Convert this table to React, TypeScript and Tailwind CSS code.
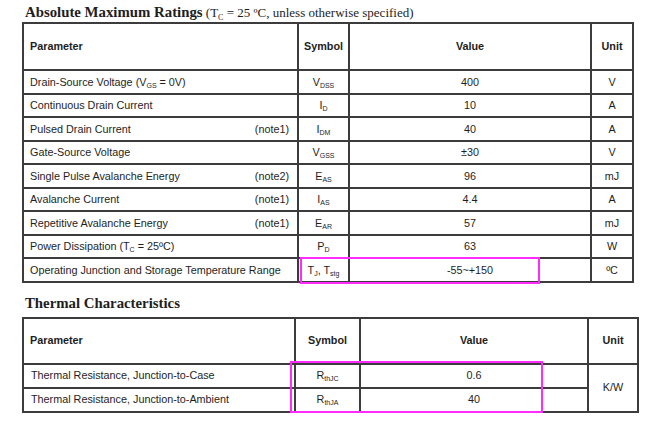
import React from 'react'

type Row = {
  param: React.ReactNode
  note?: string
  symbol: React.ReactNode
  value: string
  unit: string
}

const Sym = ({ base, sub }: { base: string; sub: string }) => (
  <span>
    {base}
    <span className="text-[7px] relative top-[2px]">{sub}</span>
  </span>
)

const ratings: Row[] = [
  {
    param: (
      <span>
        Drain-Source Voltage (V<span className="text-[7px] relative top-[2px]">GS</span> = 0V)
      </span>
    ),
    symbol: <Sym base="V" sub="DSS" />,
    value: '400',
    unit: 'V',
  },
  { param: 'Continuous Drain Current', symbol: <Sym base="I" sub="D" />, value: '10', unit: 'A' },
  { param: 'Pulsed Drain Current', note: '(note1)', symbol: <Sym base="I" sub="DM" />, value: '40', unit: 'A' },
  { param: 'Gate-Source Voltage', symbol: <Sym base="V" sub="GSS" />, value: '±30', unit: 'V' },
  { param: 'Single Pulse Avalanche Energy', note: '(note2)', symbol: <Sym base="E" sub="AS" />, value: '96', unit: 'mJ' },
  { param: 'Avalanche Current', note: '(note1)', symbol: <Sym base="I" sub="AS" />, value: '4.4', unit: 'A' },
  { param: 'Repetitive Avalanche Energy', note: '(note1)', symbol: <Sym base="E" sub="AR" />, value: '57', unit: 'mJ' },
  {
    param: (
      <span>
        Power Dissipation (T<span className="text-[7px] relative top-[2px]">C</span> = 25ºC)
      </span>
    ),
    symbol: <Sym base="P" sub="D" />,
    value: '63',
    unit: 'W',
  },
  {
    param: 'Operating Junction and Storage Temperature Range',
    symbol: (
      <span>
        T<span className="text-[7px] relative top-[2px]">J</span>, T<span className="text-[7px] relative top-[2px]">stg</span>
      </span>
    ),
    value: '-55~+150',
    unit: 'ºC',
  },
]

const cell = 'border-2 border-[#3c3c3c]'

export default function App() {
  return (
    <div
      className="relative w-[663px] h-[424px] bg-white text-[#1e1e1e] overflow-hidden"
      style={{ fontFamily: '"Liberation Sans", Arial, sans-serif' }}
    >
      {/* title 1 */}
      <div className="h-[22px] pl-[25px] pt-[3px] leading-[18px]" style={{ fontFamily: '"Liberation Serif", serif' }}>
        <span className="text-[14.8px] font-bold">Absolute Maximum Ratings</span>
        <span className="text-[13px]">
          {' '}(T<span className="text-[8px] relative top-[3px]">C</span> = 25 ºC, unless otherwise specified)
        </span>
      </div>

      <table className="ml-[22px] w-[610px] table-fixed border-collapse text-[10.8px]">
        <colgroup>
          <col className="w-[275px]" />
          <col className="w-[51px]" />
          <col className="w-[242px]" />
          <col className="w-[42px]" />
        </colgroup>
        <thead>
          <tr className="h-[47px] font-bold">
            <td className={`${cell} pl-[6px]`}>Parameter</td>
            <td className={`${cell} text-center`}>Symbol</td>
            <td className={`${cell} text-center`}>Value</td>
            <td className={`${cell} text-center`}>Unit</td>
          </tr>
        </thead>
        <tbody>
          {ratings.map((r, i) => (
            <tr key={i} className="h-[23.5px]">
              <td className={`${cell} pl-[6px] pr-[8px]`}>
                <div className="flex justify-between">
                  <span>{r.param}</span>
                  {r.note && <span>{r.note}</span>}
                </div>
              </td>
              <td className={`${cell} text-center`}>{r.symbol}</td>
              <td className={`${cell} text-center`}>{r.value}</td>
              <td className={`${cell} text-center`}>{r.unit}</td>
            </tr>
          ))}
        </tbody>
      </table>

      {/* title 2 */}
      <div className="pl-[25px] pt-[11px] pb-[5px] leading-[18px] text-[14.8px] font-bold" style={{ fontFamily: '"Liberation Serif", serif' }}>
        Thermal Characteristics
      </div>

      <table className="ml-[22px] w-[615px] table-fixed border-collapse text-[10.8px]">
        <colgroup>
          <col className="w-[272px]" />
          <col className="w-[65px]" />
          <col className="w-[228px]" />
          <col className="w-[50px]" />
        </colgroup>
        <thead>
          <tr className="h-[46px] font-bold">
            <td className={`${cell} pl-[6px]`}>Parameter</td>
            <td className={`${cell} text-center`}>Symbol</td>
            <td className={`${cell} text-center`}>Value</td>
            <td className={`${cell} text-center`}>Unit</td>
          </tr>
        </thead>
        <tbody>
          <tr className="h-[24px]">
            <td className={`${cell} pl-[7px]`}>Thermal Resistance, Junction-to-Case</td>
            <td className={`${cell} text-center`}>
              <Sym base="R" sub="thJC" />
            </td>
            <td className={`${cell} text-center`}>0.6</td>
            <td className={`${cell} text-center`} rowSpan={2}>
              K/W
            </td>
          </tr>
          <tr className="h-[24px]">
            <td className={`${cell} pl-[7px]`}>Thermal Resistance, Junction-to-Ambient</td>
            <td className={`${cell} text-center`}>
              <Sym base="R" sub="thJA" />
            </td>
            <td className={`${cell} text-center`}>40</td>
          </tr>
        </tbody>
      </table>

      {/* highlight boxes */}
      <div className="absolute left-[300px] top-[257px] w-[240px] h-[27px] border-2 border-[#ff2bff]" />
      <div className="absolute left-[290px] top-[361px] w-[253px] h-[52px] border-2 border-[#ff2bff]" />
    </div>
  )
}
